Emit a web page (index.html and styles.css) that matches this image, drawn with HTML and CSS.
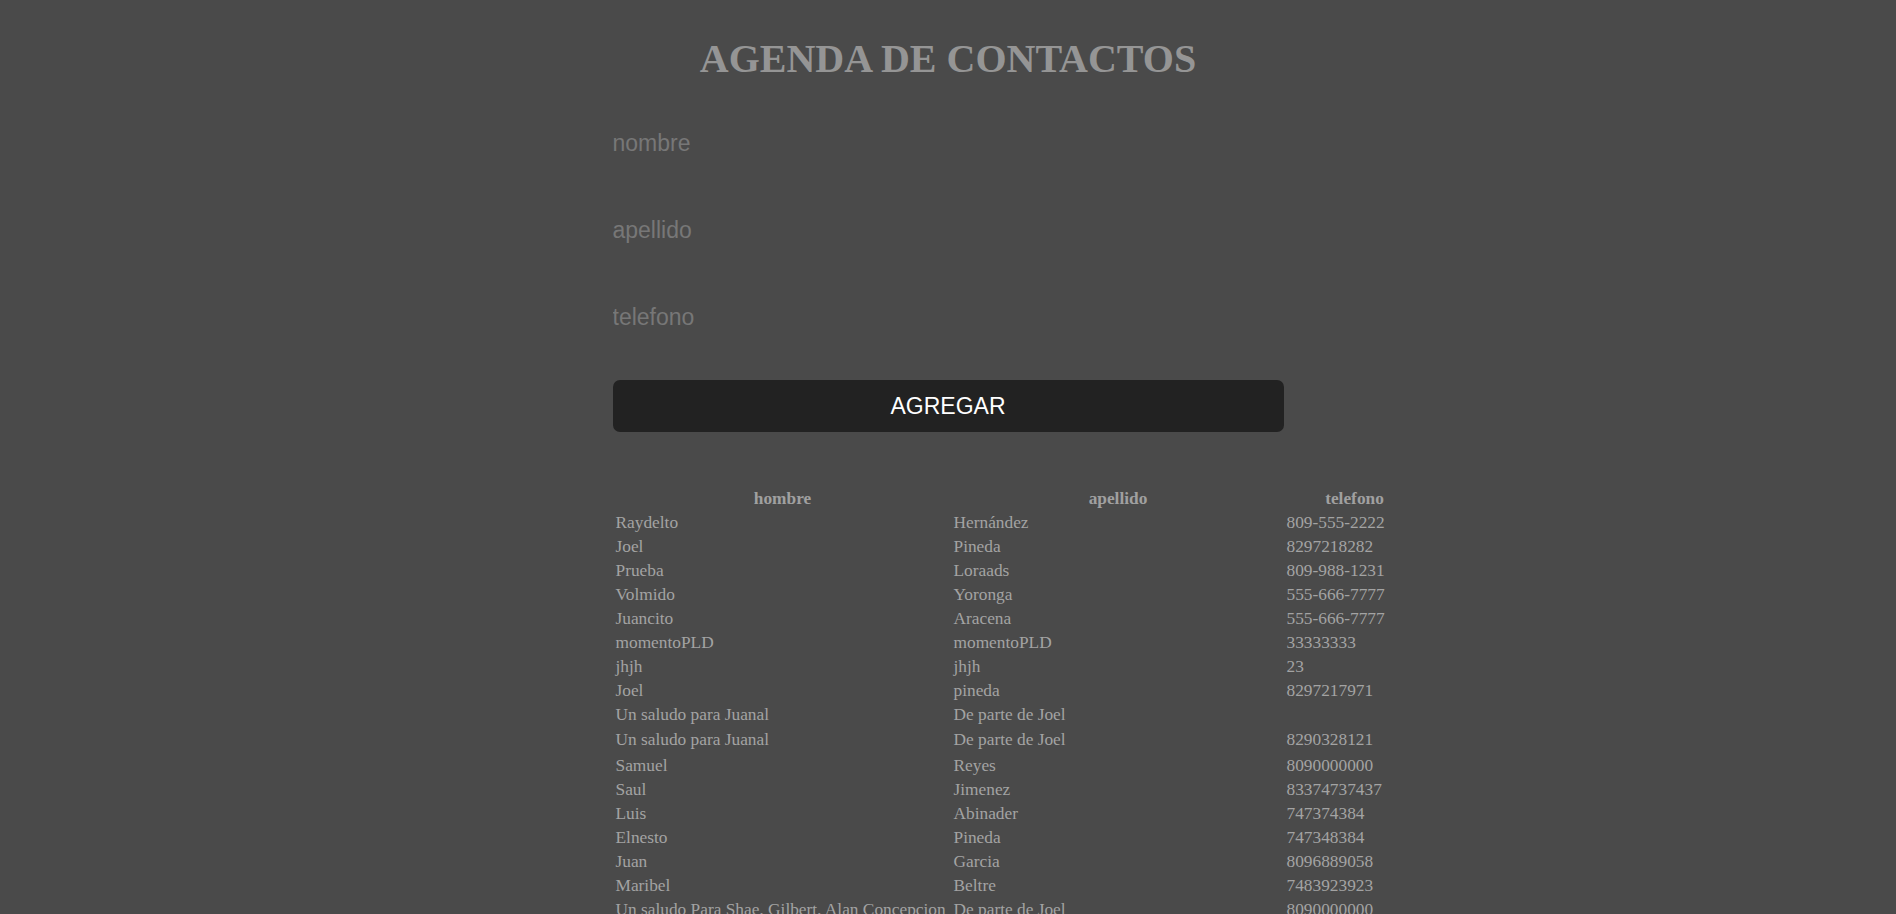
FILE: index.html
```html
<!DOCTYPE html>
<html lang="es">
<head>
<meta charset="utf-8">
<title>Agenda de contactos</title>
<link rel="stylesheet" href="styles.css">
</head>
<body>
<main class="agenda">
  <h1 class="title">AGENDA DE CONTACTOS</h1>
  <form class="form">
    <input class="field" type="text" placeholder="nombre">
    <input class="field" type="text" placeholder="apellido">
    <input class="field field-last" type="text" placeholder="telefono">
    <button class="add" type="button">AGREGAR</button>
  </form>
  <table class="contacts">
    <thead>
      <tr><th class="c-name">hombre</th><th class="c-last">apellido</th><th class="c-phone">telefono</th></tr>
    </thead>
    <tbody>
      <tr><td>Raydelto</td><td>Hernández</td><td>809-555-2222</td></tr>
      <tr><td>Joel</td><td>Pineda</td><td>8297218282</td></tr>
      <tr><td>Prueba</td><td>Loraads</td><td>809-988-1231</td></tr>
      <tr><td>Volmido</td><td>Yoronga</td><td>555-666-7777</td></tr>
      <tr><td>Juancito</td><td>Aracena</td><td>555-666-7777</td></tr>
      <tr><td>momentoPLD</td><td>momentoPLD</td><td>33333333</td></tr>
      <tr><td>jhjh</td><td>jhjh</td><td>23</td></tr>
      <tr><td>Joel</td><td>pineda</td><td>8297217971</td></tr>
      <tr><td>Un saludo para Juanal</td><td>De parte de Joel</td><td></td></tr>
      <tr class="row-gap-s"><td>Un saludo para Juanal</td><td>De parte de Joel</td><td>8290328121</td></tr>
      <tr class="row-gap-l"><td>Samuel</td><td>Reyes</td><td>8090000000</td></tr>
      <tr><td>Saul</td><td>Jimenez</td><td>83374737437</td></tr>
      <tr><td>Luis</td><td>Abinader</td><td>747374384</td></tr>
      <tr><td>Elnesto</td><td>Pineda</td><td>747348384</td></tr>
      <tr><td>Juan</td><td>Garcia</td><td>8096889058</td></tr>
      <tr><td>Maribel</td><td>Beltre</td><td>7483923923</td></tr>
      <tr><td>Un saludo Para Shae, Gilbert, Alan Concepcion</td><td>De parte de Joel</td><td>8090000000</td></tr>
    </tbody>
  </table>
</main>
</body>
</html>
```

FILE: styles.css
```css
html, body {
  margin: 0;
  padding: 0;
  background: #4a4a4a;
}

body {
  font-family: "Liberation Serif", "Times New Roman", serif;
  overflow: hidden;
}

.agenda {
  width: 671px;
  margin: 0 auto;
  padding-top: 36px;
}

.title {
  margin: 0;
  font-family: "Liberation Serif", "Times New Roman", serif;
  font-size: 40px;
  line-height: 46px;
  font-weight: bold;
  color: #959595;
  text-align: center;
}

.form {
  display: flex;
  flex-direction: column;
  margin-top: 38px;
}

.field {
  display: block;
  height: 46px;
  margin: 0 0 41px 0;
  padding: 0;
  border: 0;
  outline: none;
  background: transparent;
  font-family: "Liberation Sans", Arial, sans-serif;
  font-size: 23px;
  color: #cfcfcf;
}

.field-last {
  margin-bottom: 40px;
}

.field::placeholder {
  color: #777777;
}

.add {
  height: 52px;
  border: 0;
  border-radius: 7px;
  background: #222222;
  color: #ffffff;
  font-family: "Liberation Sans", Arial, sans-serif;
  font-size: 23px;
  cursor: pointer;
}

.contacts {
  table-layout: fixed;
  width: 813px;
  margin-top: 54px;
  border-spacing: 2px;
  font-size: 13pt;
  color: #a3a3a3;
}

.contacts th,
.contacts td {
  padding: 1px;
  white-space: nowrap;
}

.contacts th {
  font-weight: bold;
  text-align: center;
  color: #a0a0a0;
}

.contacts td {
  text-align: left;
}

.c-name { width: 334px; }
.c-last { width: 329px; }
.c-phone { width: 136px; }

.row-gap-s td { padding-top: 2px; }
.row-gap-l td { padding-top: 2.5px; }
```
